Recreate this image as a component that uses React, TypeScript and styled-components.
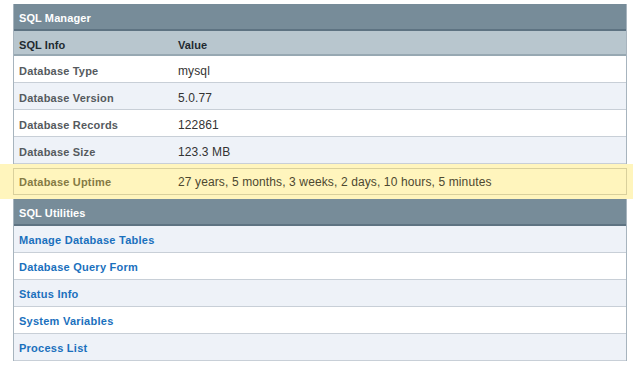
import { createGlobalStyle } from 'styled-components';
import styled from 'styled-components';

const GlobalStyle = createGlobalStyle`
	html, body {
		margin: 0;
		padding: 0;
		background: #ffffff;
	}
	body {
		font-family: 'Liberation Sans', Arial, sans-serif;
		font-size: 11px;
	}
	* {
		box-sizing: border-box;
	}
`;

const Page = styled.div`
	width: 633px;
	padding-top: 4px;
`;

const Panel = styled.div`
	margin: 0 6px 0 13px;
	border-left: 1px solid #a7b4be;
	border-right: 1px solid #a7b4be;
`;

const Header = styled.div`
	display: flex;
	align-items: center;
	height: 27px;
	padding: 2px 0 0 5px;
	background: #778c99;
	border-bottom: 2px solid #5e7382;
	color: #ffffff;
	font-weight: bold;
	font-size: 11px;
	letter-spacing: 0.1px;
`;

const SubHeader = styled.div`
	display: grid;
	grid-template-columns: 159px 1fr;
	align-items: center;
	height: 25px;
	padding: 4px 0 0 5px;
	background: #b8c6ce;
	border-bottom: 2px solid #97a8b2;
	color: #1f2a30;
	font-weight: bold;
	font-size: 11px;
	letter-spacing: 0.1px;
`;

const Row = styled.div<{ $alt?: boolean }>`
	display: grid;
	grid-template-columns: 159px 1fr;
	align-items: center;
	height: 27px;
	padding: 4px 0 0 5px;
	background: ${(p) => (p.$alt ? '#eef2f8' : '#ffffff')};
	border-bottom: 1px solid #c8cfd7;
`;

const Label = styled.span`
	color: #555a5e;
	font-weight: bold;
	font-size: 11px;
	letter-spacing: 0.2px;
`;

const Value = styled.span`
	color: #333333;
	font-size: 12px;
	letter-spacing: 0.12px;
`;

const Band = styled.div`
	background: #fff5bd;
	padding: 4px 6px 4px 13px;
`;

const HighlightRow = styled.div`
	display: grid;
	grid-template-columns: 159px 1fr;
	align-items: center;
	height: 27px;
	padding: 1px 0 0 5px;
	border: 1px solid #d9d09c;
`;

const HighlightLabel = styled(Label)`
	color: #857a44;
`;

const HighlightValue = styled(Value)`
	color: #4d4830;
`;

const LinkRow = styled.div<{ $alt?: boolean }>`
	display: flex;
	align-items: center;
	height: 27px;
	padding: 2px 0 0 5px;
	background: ${(p) => (p.$alt ? '#eef2f8' : '#ffffff')};
	border-bottom: 1px solid #c8cfd7;

	a {
		color: #1a70bd;
		font-weight: bold;
		font-size: 11px;
		letter-spacing: 0.25px;
		text-decoration: none;
	}
`;

const info = [
	{ label: 'Database Type', value: 'mysql' },
	{ label: 'Database Version', value: '5.0.77' },
	{ label: 'Database Records', value: '122861' },
	{ label: 'Database Size', value: '123.3 MB' },
];

const links = [
	'Manage Database Tables',
	'Database Query Form',
	'Status Info',
	'System Variables',
	'Process List',
];

const App = () => {
	return (
		<>
			<GlobalStyle />
			<Page>
				<Panel>
					<Header>SQL Manager</Header>
					<SubHeader>
						<span>SQL Info</span>
						<span>Value</span>
					</SubHeader>
					{info.map((item, i) => (
						<Row key={item.label} $alt={i % 2 === 1}>
							<Label>{item.label}</Label>
							<Value>{item.value}</Value>
						</Row>
					))}
				</Panel>
				<Band>
					<HighlightRow>
						<HighlightLabel>Database Uptime</HighlightLabel>
						<HighlightValue>
							27 years, 5 months, 3 weeks, 2 days, 10 hours, 5 minutes
						</HighlightValue>
					</HighlightRow>
				</Band>
				<Panel>
					<Header>SQL Utilities</Header>
					{links.map((link, i) => (
						<LinkRow key={link} $alt={i % 2 === 0}>
							<a href="#">{link}</a>
						</LinkRow>
					))}
				</Panel>
			</Page>
		</>
	);
};

export default App;
